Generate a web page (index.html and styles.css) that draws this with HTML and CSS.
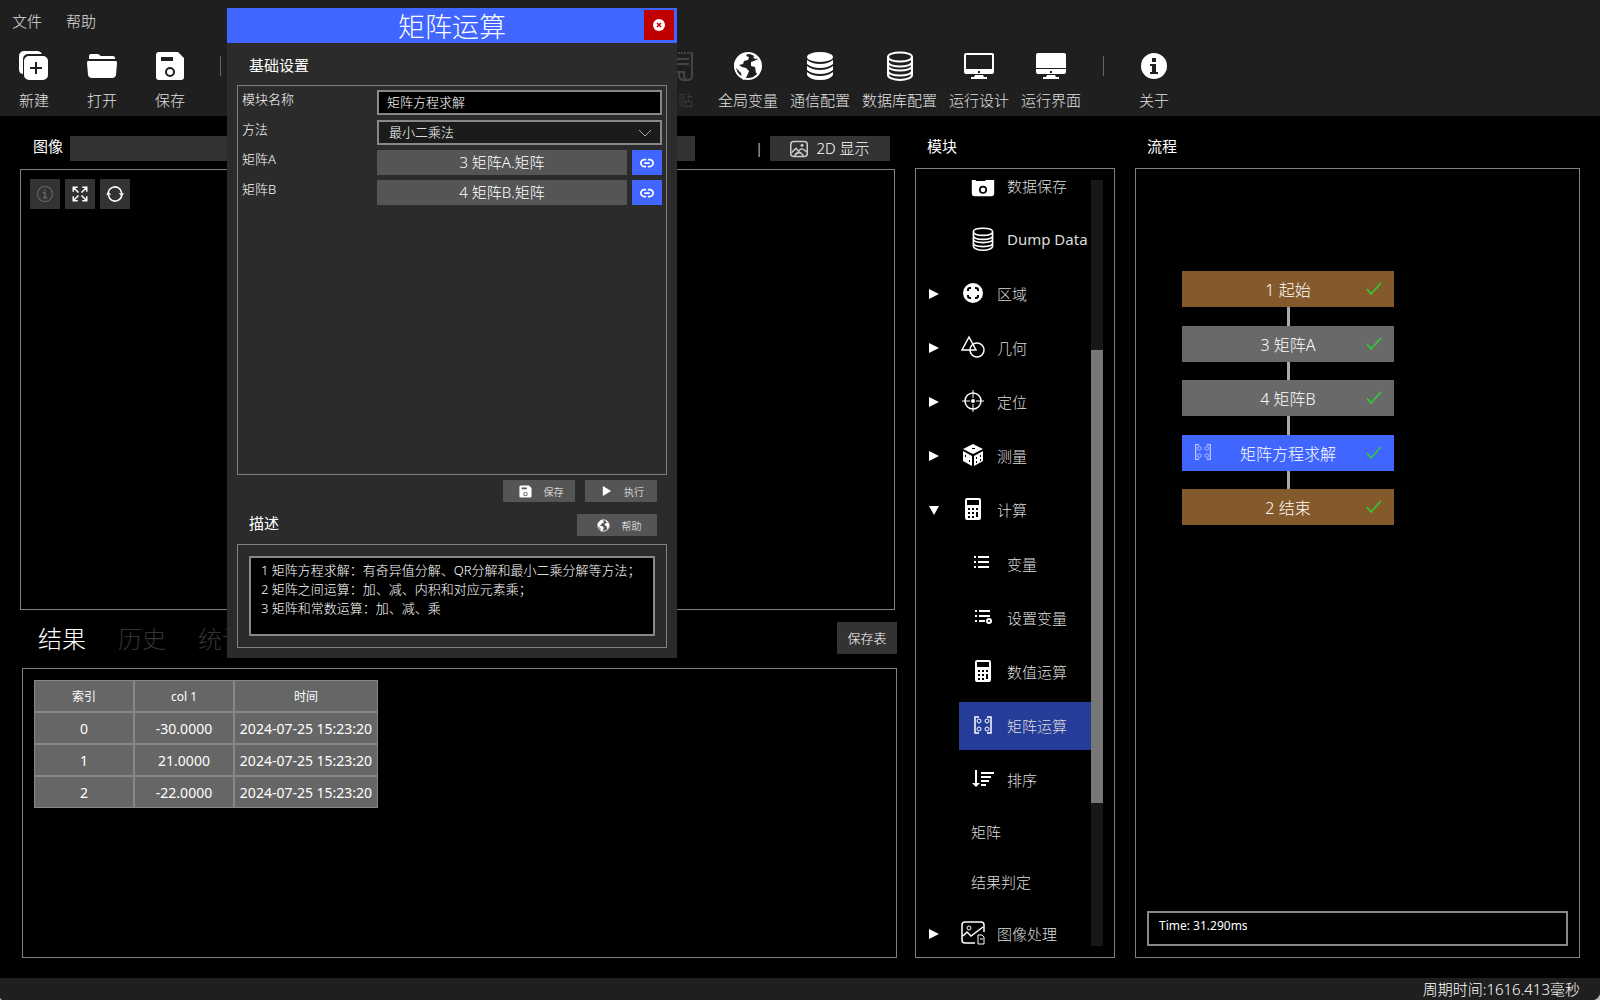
FILE: index.html
```html
<!DOCTYPE html>
<html lang="zh-CN">
<head>
  <meta charset="UTF-8">
  <meta name="viewport" content="width=device-width, initial-scale=1.0">
  <title>矩阵运算</title>
  <link rel="stylesheet" href="styles.css">
</head>
<body>
  <!-- shared icons -->
  <svg class="sprite" aria-hidden="true">
    <symbol id="i-new" viewBox="0 0 30 30"><path d="M5 0h14a5 5 0 0 1 4 3H9a5 5 0 0 0-5 5v15C1 23 0 20 0 18V5a5 5 0 0 1 5-5z"/><path fill-rule="evenodd" d="M10 5h14a5 5 0 0 1 5 5v14a5 5 0 0 1-5 5H10a5 5 0 0 1-5-5V10a5 5 0 0 1 5-5zm6 6v5h-5v2h5v5h2v-5h5v-2h-5v-5z"/></symbol>
    <symbol id="i-open" viewBox="0 0 30 30"><path d="M2 8V5a2 2 0 0 1 2-2h7l3 2h12a2 2 0 0 1 2 2v1zM1 10h28q1 0 1 2l-1 12a4 4 0 0 1-4 3H5a4 4 0 0 1-4-3L0 12q0-2 1-2z"/></symbol>
    <symbol id="i-save" viewBox="0 0 30 30"><path fill-rule="evenodd" d="M4 1h19l6 6v19a3 3 0 0 1-3 3H4a3 3 0 0 1-3-3V4a3 3 0 0 1 3-3zm2 5v4h12V6zm9 10a5 5 0 1 0 0 10a5 5 0 1 0 0-10zm0 2a3 3 0 1 1 0 6a3 3 0 1 1 0-6z"/></symbol>
    <symbol id="i-paste" viewBox="0 0 30 30"><path fill="none" stroke="currentColor" stroke-width="2" d="M9 21V2M29 2v22q0 5-4 5t-4-5v-3h-6M11 8h15M13 13h13"/><path fill="none" stroke="currentColor" stroke-width="2" d="M4 21h12v3q0 5 5 5h4"/><path fill="none" stroke="currentColor" stroke-width="2" stroke-dasharray="2 1" d="M9 2h20"/></symbol>
    <symbol id="i-globe" viewBox="0 0 30 30"><circle cx="15" cy="15" r="13" fill="none" stroke="currentColor" stroke-width="2"/><path d="M4 8l5-5 6-1-2 3 3 1-1 3-4 1-1 3-4 1 3 2 4 1 3 3-2 5-3 4-2-1-1-6-4-4-3-5zM19 2l4 2-2 2zM21 10l4-2 3 4v5l-3 6-2-1-1-6-4-1v-4zM20 6l4-1 2 2-4 1z"/></symbol>
    <symbol id="i-db" viewBox="0 0 30 30"><ellipse cx="15" cy="6" rx="13" ry="5"/><path d="M2 9q5 4 13 4t13-4v4q-5 4-13 4T2 13zM2 15q5 4 13 4t13-4v4q-5 4-13 4T2 19zM2 21q5 4 13 4t13-4v3q-3 5-13 5T2 24z"/></symbol>
    <symbol id="i-dbline" viewBox="0 0 30 30"><path fill="none" stroke="currentColor" stroke-width="2" d="M3 6v18c0 2.500 5 5 12 5s12-2.500 12-5V6M3 6c0 6 24 6 24 0S3 0 3 6zM3 11c0 6 24 6 24 0M3 15c0 6 24 6 24 0M3 20c0 6 24 6 24 0"/></symbol>
    <symbol id="i-monitor" viewBox="0 0 30 30"><path fill-rule="evenodd" d="M2 2h26a2 2 0 0 1 2 2v17a2 2 0 0 1-2 2H2a2 2 0 0 1-2-2V4a2 2 0 0 1 2-2zm0 2v14h26V4zm12 16v2h2v-2zM11 24h8l1 2h3v2H7v-2h3z"/></symbol>
    <symbol id="i-screen" viewBox="0 0 30 30"><path d="M2 2h26a2 2 0 0 1 2 2v13H0V4a2 2 0 0 1 2-2z"/><path fill-rule="evenodd" d="M0 18h30v3a2 2 0 0 1-2 2H2a2 2 0 0 1-2-2zm14 2v2h2v-2zM11 24h8l1 2h3v2H7v-2h3z"/></symbol>
    <symbol id="i-info" viewBox="0 0 30 30"><path fill-rule="evenodd" d="M15 2a13 13 0 1 0 0 26a13 13 0 1 0 0-26zm-2 5h4v4h-4zm-2 6h6v8h2v2h-8v-2h2v-6h-2z"/></symbol>
    <symbol id="i-infoline" viewBox="0 0 24 24"><g fill="none" stroke="currentColor" stroke-width="1.500"><circle cx="12" cy="12" r="10"/><path d="M9 10h3v7M9 17h6" stroke-width="2"/></g><path d="M11 6h2v2h-2z"/></symbol>
    <symbol id="i-expand" viewBox="0 0 24 24"><path fill="none" stroke="currentColor" stroke-width="2" d="M3 9V3h6M3 3l7 7M15 3h6v6M21 3l-7 7M3 15v6h6M3 21l7-7M21 15v6h-6M21 21l-7-7"/></symbol>
    <symbol id="i-refresh" viewBox="0 0 24 24"><path fill="none" stroke="currentColor" stroke-width="2" d="M3 12a9 9 0 0 1 16-6l2 5M21 12a9 9 0 0 1-16 6l-2-5"/><path d="M17 11h7l-3 4zM0 13h7l-4-4z"/></symbol>
    <symbol id="i-picture" viewBox="0 0 24 24"><g fill="none" stroke="currentColor" stroke-width="2"><rect x="1" y="2" width="22" height="20" rx="4"/><path d="M2 17l6-6 5 6M12 14l3-2q2-1 7 4M6 21q3-5 8-4l4 4"/></g><circle cx="16" cy="7" r="2"/></symbol>
    <symbol id="i-region" viewBox="0 0 24 24"><circle cx="12" cy="12" r="10"/><path fill="none" stroke="#000" stroke-width="2" d="M7 10V9q0-2 2-2h1M14 7h1q2 0 2 2v1M17 14v1q0 2-2 2h-1M10 17H9q-2 0-2-2v-1"/></symbol>
    <symbol id="i-shapes" viewBox="0 0 24 24"><g fill="none" stroke="currentColor" stroke-width="1.500"><path d="M8 2L1 15h14z"/><circle cx="16" cy="15" r="7"/></g></symbol>
    <symbol id="i-target" viewBox="0 0 24 24"><g fill="none" stroke="currentColor" stroke-width="1.500"><circle cx="12" cy="12" r="8"/><path d="M12 1v8M12 15v8M1 12h8M15 12h8" stroke-width="1"/></g><circle cx="12" cy="12" r="2"/></symbol>
    <symbol id="i-dice" viewBox="0 0 24 24"><path d="M12 1l10 5-10 5L2 6zM2 8l9 5v10l-9-5zM22 8l-9 5v10l9-5z"/><path fill="#000" d="M11 5h3v1h-3zM4 12h1v2H4zM8 17h1v2H8zM15 14h1v2h-1zM19 12h1v2h-1zM15 18h1v2h-1zM19 16h1v2h-1z"/></symbol>
    <symbol id="i-calc" viewBox="0 0 24 24"><path fill-rule="evenodd" d="M6 1h12a2 2 0 0 1 2 2v18a2 2 0 0 1-2 2H6a2 2 0 0 1-2-2V3a2 2 0 0 1 2-2zm0 2v5h12V3zm1 8v2h2v-2zm4 0v2h2v-2zm4 0v2h2v-2zm-8 4v2h2v-2zm4 0v2h2v-2zm4 0v5h2v-5zm-8 4v2h2v-2zm4 0v2h2v-2z"/></symbol>
    <symbol id="i-list" viewBox="0 0 24 24"><path d="M3 5h2v2H3zM7 5h11v2H7zM3 10h2v2H3zM7 10h11v2H7zM3 15h2v2H3zM7 15h11v2H7z"/></symbol>
    <symbol id="i-listset" viewBox="0 0 24 24"><path d="M4 5h2v2H4zM8 5h11v2H8zM4 10h2v2H4zM8 10h11v2H8zM4 15h2v2H4zM8 15h6v2H8z"/><circle cx="18" cy="16" r="2" fill="none" stroke="currentColor" stroke-width="2"/></symbol>
    <symbol id="i-matrix" viewBox="0 0 24 24"><g fill="none" stroke="currentColor"><path d="M8 4H4v16h4M16 4h4v16h-4" stroke-width="1.500"/><circle cx="8" cy="8" r="2"/><circle cx="16" cy="8" r="2"/><circle cx="8" cy="16" r="2"/><circle cx="16" cy="16" r="2"/></g></symbol>
    <symbol id="i-sort" viewBox="0 0 24 24"><path d="M4 3h2v13h3l-4 4-4-4h3zM10 5h13v2H10zM10 9h10v2H10zM10 13h8v2h-8zM10 17h5v2h-5z"/></symbol>
    <symbol id="i-imgproc" viewBox="0 0 24 24"><g fill="none" stroke="currentColor" stroke-width="1.500"><path d="M14 22H4q-3 0-3-3V4q0-3 3-3h16q3 0 3 3v7M2 15l4-4 4 4 12-9"/></g><circle cx="8" cy="7" r="2" fill="none" stroke="currentColor"/><path fill="none" stroke="currentColor" d="M17 14h4l2 2v7h-6zM19 18h3"/></symbol>
    <symbol id="i-link" viewBox="0 0 16 16"><path fill="none" stroke="currentColor" stroke-width="2" d="M7 12H5a4 4 0 0 1 0-8h2M9 4h2a4 4 0 0 1 0 8H9M5 8h6"/></symbol>
    <symbol id="i-play" viewBox="0 0 12 12"><path d="M1 0l10 6-10 6z"/></symbol>
    <symbol id="i-check" viewBox="0 0 16 16"><path fill="none" stroke="#32cd32" stroke-width="1.500" d="M1 8l4 5L15 2"/></symbol>
    <symbol id="i-close" viewBox="0 0 12 12"><circle cx="6" cy="6" r="6"/><path stroke="#c00000" stroke-width="1.500" d="M4 4l4 4M8 4l-4 4"/></symbol>
    <symbol id="i-right" viewBox="0 0 10 10"><path d="M0 0l10 5-10 5z"/></symbol>
    <symbol id="i-down" viewBox="0 0 10 10"><path d="M0 1h10l-5 9z"/></symbol>
  </svg>

  <div class="app">
    <header class="top">
      <nav class="menu">
        <button>文件</button>
        <button>帮助</button>
      </nav>
      <div class="toolbar">
        <div class="tool-group">
          <button class="tool"><svg><use href="#i-new"/></svg>新建</button>
          <button class="tool"><svg><use href="#i-open"/></svg>打开</button>
          <button class="tool"><svg><use href="#i-save"/></svg>保存</button>
          <span class="sep"></span>
        </div>
        <div class="tool-group">
          <button class="tool" disabled><svg><use href="#i-paste"/></svg>粘贴</button>
          <button class="tool"><svg><use href="#i-globe"/></svg>全局变量</button>
          <button class="tool"><svg><use href="#i-db"/></svg>通信配置</button>
          <button class="tool"><svg><use href="#i-dbline"/></svg>数据库配置</button>
          <button class="tool"><svg><use href="#i-monitor"/></svg>运行设计</button>
          <button class="tool"><svg><use href="#i-screen"/></svg>运行界面</button>
          <span class="sep"></span>
          <button class="tool"><svg><use href="#i-info"/></svg>关于</button>
        </div>
      </div>
    </header>

    <main class="content">
      <section class="left">
        <div class="image-bar">
          <h2>图像</h2>
          <div class="image-name"></div>
          <span class="bar">|</span>
          <button class="display-btn"><svg><use href="#i-picture"/></svg>2D 显示</button>
        </div>
        <div class="panel image-view">
          <button aria-label="信息" disabled><svg><use href="#i-infoline"/></svg></button>
          <button aria-label="适应"><svg><use href="#i-expand"/></svg></button>
          <button aria-label="刷新"><svg><use href="#i-refresh"/></svg></button>
        </div>
        <div class="tabs">
          <button class="active">结果</button>
          <button>历史</button>
          <button>统计</button>
          <button class="save-table">保存表</button>
        </div>
        <div class="panel results">
          <table>
            <thead>
              <tr><th>索引</th><th>col 1</th><th class="time">时间</th></tr>
            </thead>
            <tbody>
              <tr><td>0</td><td>-30.0000</td><td>2024-07-25 15:23:20</td></tr>
              <tr><td>1</td><td>21.0000</td><td>2024-07-25 15:23:20</td></tr>
              <tr><td>2</td><td>-22.0000</td><td>2024-07-25 15:23:20</td></tr>
            </tbody>
          </table>
        </div>
      </section>

      <section class="modules">
        <h2>模块</h2>
        <div class="panel tree-panel">
          <div class="tree">
            <ul>
              <li class="child"><svg><use href="#i-save"/></svg>数据保存</li>
              <li class="child latin"><svg><use href="#i-dbline"/></svg>Dump Data</li>
              <li><svg class="arrow"><use href="#i-right"/></svg><svg><use href="#i-region"/></svg>区域</li>
              <li><svg class="arrow"><use href="#i-right"/></svg><svg><use href="#i-shapes"/></svg>几何</li>
              <li><svg class="arrow"><use href="#i-right"/></svg><svg><use href="#i-target"/></svg>定位</li>
              <li><svg class="arrow"><use href="#i-right"/></svg><svg><use href="#i-dice"/></svg>测量</li>
              <li><svg class="arrow"><use href="#i-down"/></svg><svg><use href="#i-calc"/></svg>计算</li>
              <li class="child"><svg><use href="#i-list"/></svg>变量</li>
              <li class="child"><svg><use href="#i-listset"/></svg>设置变量</li>
              <li class="child"><svg><use href="#i-calc"/></svg>数值运算</li>
              <li class="child selected"><svg><use href="#i-matrix"/></svg>矩阵运算</li>
              <li class="child"><svg><use href="#i-sort"/></svg>排序</li>
              <li class="child plain">矩阵</li>
              <li class="child plain">结果判定</li>
              <li><svg class="arrow"><use href="#i-right"/></svg><svg><use href="#i-imgproc"/></svg>图像处理</li>
            </ul>
          </div>
          <div class="scrollbar"><div class="thumb"></div></div>
        </div>
      </section>

      <section class="flow">
        <h2>流程</h2>
        <div class="panel flow-panel">
          <div class="nodes">
            <div class="node end">1 起始<svg class="check"><use href="#i-check"/></svg></div>
            <div class="line"></div>
            <div class="node">3 矩阵A<svg class="check"><use href="#i-check"/></svg></div>
            <div class="line"></div>
            <div class="node">4 矩阵B<svg class="check"><use href="#i-check"/></svg></div>
            <div class="line"></div>
            <div class="node current"><svg class="kind"><use href="#i-matrix"/></svg>矩阵方程求解<svg class="check"><use href="#i-check"/></svg></div>
            <div class="line"></div>
            <div class="node end">2 结束<svg class="check"><use href="#i-check"/></svg></div>
          </div>
          <div class="log">Time: 31.290ms</div>
        </div>
      </section>
    </main>

    <footer class="status">周期时间:1616.413毫秒</footer>
  </div>

  <div class="dialog" role="dialog" aria-labelledby="dialog-title">
    <div class="dialog-title">
      <h1 id="dialog-title">矩阵运算</h1>
      <button class="close" aria-label="关闭"><svg><use href="#i-close"/></svg></button>
    </div>
    <div class="dialog-body">
      <h2>基础设置</h2>
      <div class="panel form">
        <div class="form-row">
          <label for="name">模块名称</label>
          <input type="text" id="name" value="矩阵方程求解">
        </div>
        <div class="form-row">
          <label for="method">方法</label>
          <select id="method"><option>最小二乘法</option></select>
        </div>
        <div class="form-row">
          <label for="matrix-a">矩阵A</label>
          <button class="value" id="matrix-a">3 矩阵A.矩阵</button>
          <button class="link" aria-label="链接矩阵A"><svg><use href="#i-link"/></svg></button>
        </div>
        <div class="form-row">
          <label for="matrix-b">矩阵B</label>
          <button class="value" id="matrix-b">4 矩阵B.矩阵</button>
          <button class="link" aria-label="链接矩阵B"><svg><use href="#i-link"/></svg></button>
        </div>
      </div>
      <div class="actions">
        <button><svg><use href="#i-save"/></svg>保存</button>
        <button><svg class="play"><use href="#i-play"/></svg>执行</button>
      </div>
      <div class="desc-head">
        <h2>描述</h2>
        <button><svg><use href="#i-globe"/></svg>帮助</button>
      </div>
      <div class="panel desc">
        <div class="desc-text">
          <p>1 矩阵方程求解：有奇异值分解、QR分解和最小二乘分解等方法；</p>
          <p>2 矩阵之间运算：加、减、内积和对应元素乘；</p>
          <p>3 矩阵和常数运算：加、减、乘</p>
        </div>
      </div>
    </div>
  </div>
</body>
</html>
```
FILE: styles.css
```css
* {
  box-sizing: border-box;
}
body {
  margin: 0;
  font-family: "Noto Sans", "Noto Sans CJK SC", sans-serif;
  font-size: 15px;
  font-weight: 300;
  color: #fff;
  background: #bbb;
}
button, input, select {
  font: inherit;
  color: inherit;
  border: none;
  border-radius: 0;
  padding: 0;
  margin: 0;
  background: none;
}
h1, h2, p, ul {
  margin: 0;
  padding: 0;
}
h2 {
  font-size: 15px;
  font-weight: 400;
  line-height: 20px;
}
svg {
  width: 24px;
  height: 24px;
  flex: none;
  fill: currentColor;
}
.sprite {
  position: absolute;
  width: 0;
  height: 0;
}
.app {
  display: flex;
  flex-direction: column;
  height: 100vh;
  overflow: hidden;
  border-radius: 0 0 8px 4px;
  background: #000;
}
.panel {
  border: 1px solid #808080;
}

/* header */
.top {
  height: 116px;
  background: #1f1f1f;
}
.menu {
  display: flex;
  gap: 24px;
  padding: 11px 12px 0;
}
.menu button {
  line-height: 20px;
  color: #e0e0e0;
}
.toolbar {
  display: grid;
  grid-template-columns: 644px auto;
  justify-content: start;
  padding: 20px 6px 0;
}
.tool-group {
  display: flex;
  gap: 12px;
}
.tool {
  display: flex;
  flex-direction: column;
  align-items: center;
  gap: 9px;
  min-width: 56px;
  line-height: 20px;
  color: #e0e0e0;
}
.tool svg {
  width: 30px;
  height: 30px;
  color: #fff;
}
.tool:disabled, .tool:disabled svg {
  color: #444;
}
.sep {
  width: 1px;
  height: 20px;
  margin: 5px 10px 0;
  background: #666;
}

/* main columns */
.content {
  flex: 1;
  min-height: 0;
  display: grid;
  grid-template-columns: 1fr 200px 445px;
  grid-template-rows: minmax(0, 1fr);
  gap: 20px;
  padding: 20px 20px 20px;
}
.left {
  display: flex;
  flex-direction: column;
  margin-right: -2px;
}
.image-bar {
  display: flex;
  height: 25px;
  margin-right: 7px;
  line-height: 25px;
}
.image-bar h2 {
  padding: 0 7px 0 13px;
}
.image-name {
  flex: 1;
  height: 25px;
  background: #333;
}
.bar {
  width: 75px;
  padding-left: 60px;
}
.display-btn {
  display: flex;
  align-items: center;
  justify-content: center;
  gap: 8px;
  width: 120px;
  height: 25px;
  background: #333;
}
.display-btn svg {
  width: 18px;
  height: 18px;
  color: #ccc;
}
.image-view {
  display: flex;
  gap: 5px;
  height: 441px;
  margin: 8px 2px 0 0;
  padding: 9px;
}
.image-view button {
  width: 30px;
  height: 30px;
  background: #333;
}
.image-view svg {
  display: block;
  width: 18px;
  height: 18px;
  margin: auto;
}
.image-view button:disabled {
  color: #666;
}
.tabs {
  display: flex;
  align-items: center;
  gap: 32px;
  height: 58px;
  padding-left: 18px;
}
.tabs button {
  font-size: 24px;
  line-height: 34px;
  color: #333;
}
.tabs .active {
  color: #fff;
}
.tabs .save-table {
  width: 60px;
  margin: 0 0 2px auto;
  font-size: 13px;
  line-height: 32px;
  color: #fff;
  background: #333;
}
.results {
  flex: 1;
  margin-left: 2px;
  padding: 11px;
}
table {
  border-collapse: separate;
  border-spacing: 0;
  table-layout: fixed;
  width: 344px;
  font-size: 14px;
  font-weight: 400;
  background: #666;
}
th, td {
  height: 32px;
  padding: 0;
  border: 1px solid #888;
  text-align: center;
}
th {
  width: 100px;
  font-size: 12px;
  font-weight: 400;
}
.time {
  width: 144px;
}

/* modules */
.modules, .flow {
  display: flex;
  flex-direction: column;
  gap: 11px;
}
.modules h2, .flow h2 {
  padding-left: 12px;
  line-height: 21px;
}
.tree-panel {
  flex: 1;
  min-height: 0;
  display: flex;
  padding: 11px;
  padding-left: 9px;
}
.tree {
  flex: 1;
  min-width: 0;
  overflow: hidden;
}
/* list is scrolled by part of a row */
.tree ul {
  margin-top: -18px;
  list-style: none;
}
.tree li {
  display: flex;
  align-items: center;
  gap: 12px;
  height: 48px;
  margin-bottom: 6px;
  padding-bottom: 2px;
  color: #ddd;
  white-space: nowrap;
}
.tree li svg {
  color: #fff;
}
.tree .arrow {
  width: 10px;
  height: 10px;
  margin: 2px 10px 0 4px;
}
.tree .child {
  margin-left: 34px;
  padding-left: 12px;
}
.tree .latin {
  font-weight: 400;
}
.tree .plain {
  height: 44px;
}
.tree .selected {
  background: #263c99;
}
.scrollbar {
  display: flex;
  flex-direction: column;
  width: 12px;
  padding-top: 170px;
  background: #181818;
}
.thumb {
  height: 453px;
  background: #777;
}

/* flow */
.flow-panel {
  flex: 1;
  display: flex;
  flex-direction: column;
  justify-content: space-between;
  padding: 102px 11px 11px;
}
.nodes {
  display: flex;
  flex-direction: column;
  width: 212px;
  height: 254px;
  margin-left: 35px;
  font-size: 16px;
}
.node {
  position: relative;
  display: flex;
  align-items: center;
  justify-content: center;
  height: 36px;
  background: #696969;
}
.end {
  background: #845a2c;
}
.current {
  background: #4066ff;
}
.line {
  flex: 1;
  width: 3px;
  margin: 0 auto;
  background: #aaa;
}
.check, .kind {
  position: absolute;
  top: 10px;
  right: 12px;
  width: 16px;
  height: 16px;
}
.kind {
  top: 6px;
  left: 10px;
  width: 22px;
  height: 22px;
  opacity: 0.6;
}
.log {
  height: 35px;
  padding: 3px 10px;
  border: 2px solid #888;
  font-size: 12px;
  font-weight: 400;
  line-height: 20px;
}
.status {
  height: 22px;
  padding-right: 20px;
  font-size: 15px;
  line-height: 22px;
  text-align: right;
  background: #1f1f1f;
}

/* dialog */
.dialog {
  position: absolute;
  top: 8px;
  left: 227px;
  width: 450px;
  background: #2b2b2b;
}
.dialog-title {
  display: grid;
  grid-template-columns: 33px 1fr 33px;
  height: 35px;
  padding-top: 2px;
  background: #4066ff;
}
.dialog-title h1 {
  grid-column: 2;
  font-size: 27px;
  font-weight: 300;
  line-height: 33px;
  text-align: center;
}
.close {
  width: 30px;
  height: 30px;
  background: #c00000;
}
.close svg {
  display: block;
  width: 12px;
  height: 12px;
  margin: auto;
}
.dialog-body {
  padding: 12px 10px 10px;
}
.dialog-body h2 {
  padding-left: 12px;
}
.form {
  display: flex;
  flex-direction: column;
  gap: 5px;
  height: 390px;
  margin-top: 10px;
  padding: 4px;
}
.form-row {
  display: grid;
  grid-template-columns: 135px 1fr auto;
  height: 25px;
}
.form-row label {
  font-size: 13px;
  line-height: 18px;
}
.form-row input, .form-row select {
  width: 100%;
  grid-column: 2 / 4;
  padding: 0 8px 2px;
  border: 2px solid #888;
  font-size: 13px;
  background: #000;
}
.form-row select {
  padding: 0 10px 2px;
  appearance: none;
  background: #1b1b1b url("data:image/svg+xml,%3Csvg xmlns='http://www.w3.org/2000/svg' width='14' height='8'%3E%3Cpath d='M1 1l6 6 6-6' fill='none' stroke='%23aaa'/%3E%3C/svg%3E") no-repeat right 8px center;
}
.value {
  font-size: 15px;
  line-height: 25px;
  background: #555;
}
.link {
  width: 30px;
  margin-left: 5px;
  background: #4066ff;
}
.link svg {
  display: block;
  width: 14px;
  height: 14px;
  margin: auto;
}
.actions {
  display: flex;
  justify-content: flex-end;
  gap: 10px;
  padding: 5px 10px 12px;
}
.actions button, .desc-head button {
  display: flex;
  align-items: center;
  justify-content: center;
  gap: 12px;
  width: 72px;
  height: 22px;
  padding-left: 4px;
  font-size: 10px;
  background: #555;
}
.actions svg, .desc-head svg {
  width: 13px;
  height: 13px;
}
.actions .play {
  width: 10px;
  height: 10px;
}
.desc-head {
  display: flex;
  justify-content: space-between;
  padding-right: 10px;
}
.desc-head h2 {
  line-height: 18px;
}
.desc-head button {
  width: 80px;
}
.desc {
  margin-top: 8px;
  padding: 11px;
}
.desc-text {
  height: 80px;
  padding: 3px 10px;
  border: 2px solid #888;
  font-size: 13px;
  line-height: 19px;
  white-space: nowrap;
  background: #000;
}
```
